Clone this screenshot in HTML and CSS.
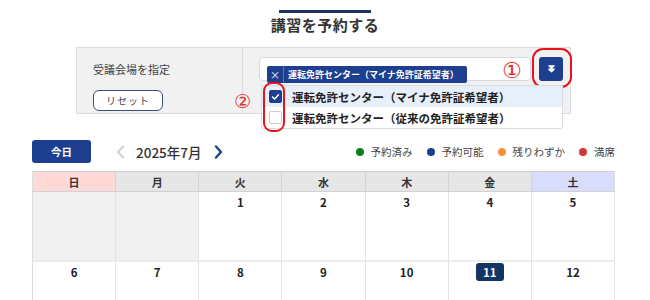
FILE: index.html
```html
<!DOCTYPE html>
<html lang="ja">
<head>
<meta charset="utf-8">
<link rel="stylesheet" href="styles.css">
</head>
<body>
<div class="page">
  <div class="title-wrap">
    <div class="title-line"></div>
    <h1 class="title">講習を予約する</h1>
  </div>

  <div class="panel">
    <div class="panel-label">
      <div class="label-text">受議会場を指定</div>
      <button class="reset">リセット</button>
    </div>
    <div class="panel-body">
      <div class="select">
        <span class="chip"><span class="chip-x">×</span><span class="chip-text">運転免許センター（マイナ免許証希望者）</span></span>
      </div>
      <button class="toggle">
        <svg width="7" height="8" viewBox="0 0 7 8"><path d="M0.8 0.8 L3.5 3.2 L6.2 0.8 Z M0.8 4.2 L3.5 6.8 L6.2 4.2 Z" fill="#fff" stroke="#fff" stroke-width="1.2" stroke-linejoin="round"/></svg>
      </button>
      <span class="mark mark1">①</span>
      <span class="hl hl1"></span>
      <div class="dropdown">
        <div class="opt opt-on"><span class="cb cb-on"><svg width="9" height="8" viewBox="0 0 9 8"><path d="M1.5 4 L3.6 6 L7.5 1.8" fill="none" stroke="#fff" stroke-width="1.5" stroke-linecap="round" stroke-linejoin="round"/></svg></span>運転免許センター（マイナ免許証希望者）</div>
        <div class="opt"><span class="cb"></span>運転免許センター（従来の免許証希望者）</div>
      </div>
      <span class="mark mark2">②</span>
      <span class="hl hl2"></span>
    </div>
  </div>

  <div class="calendar">
    <div class="toolbar">
      <button class="today">今日</button>
      <span class="nav nav-prev"><svg width="9" height="14" viewBox="0 0 9 14"><path d="M7 1.5 L2 7 L7 12.5" fill="none" stroke="#d6d6d6" stroke-width="2.4" stroke-linecap="round" stroke-linejoin="round"/></svg></span>
      <span class="month">2025年7月</span>
      <span class="nav nav-next"><svg width="9" height="14" viewBox="0 0 9 14"><path d="M2 1.5 L7 7 L2 12.5" fill="none" stroke="#1e3f8f" stroke-width="2.4" stroke-linecap="round" stroke-linejoin="round"/></svg></span>
      <div class="legend">
        <span class="lg"><i class="dot d-green"></i>予約済み</span>
        <span class="lg"><i class="dot d-navy"></i>予約可能</span>
        <span class="lg"><i class="dot d-orange"></i>残りわずか</span>
        <span class="lg"><i class="dot d-red"></i>満席</span>
      </div>
    </div>
    <div class="grid">
      <div class="hd hd-sun">日</div>
      <div class="hd">月</div>
      <div class="hd">火</div>
      <div class="hd">水</div>
      <div class="hd">木</div>
      <div class="hd">金</div>
      <div class="hd hd-sat">土</div>

      <div class="cell empty"></div>
      <div class="cell empty"></div>
      <div class="cell"><span class="num">1</span></div>
      <div class="cell"><span class="num">2</span></div>
      <div class="cell"><span class="num">3</span></div>
      <div class="cell"><span class="num">4</span></div>
      <div class="cell"><span class="num">5</span></div>

      <div class="cell"><span class="num">6</span></div>
      <div class="cell"><span class="num">7</span></div>
      <div class="cell"><span class="num">8</span></div>
      <div class="cell"><span class="num">9</span></div>
      <div class="cell"><span class="num">10</span></div>
      <div class="cell"><span class="num num-today">11</span></div>
      <div class="cell"><span class="num">12</span></div>
    </div>
  </div>
</div>
</body>
</html>
```

FILE: styles.css
```css
* { box-sizing: border-box; }
html, body { margin: 0; padding: 0; background: #fff; }
body {
  font-family: "Noto Sans CJK JP", "Noto Sans", sans-serif;
  color: #333;
  width: 650px;
  height: 300px;
  overflow: hidden;
}
.page { padding-top: 10px; }

.title-wrap { display: flex; flex-direction: column; align-items: center; }
.title-line { width: 92px; height: 3px; background: #1a3560; }
.title {
  margin: 1px 0 0;
  font-size: 15px;
  font-weight: 700;
  line-height: 22px;
  letter-spacing: 0.5px;
  color: #333;
}

.panel {
  margin: 11px 0 0 76px;
  width: 495px;
  height: 67px;
  border: 1px solid #d9dde3;
  background: #f1f1f1;
  display: flex;
}
.panel-label {
  width: 166px;
  border-right: 1px solid #d9dde3;
  padding: 13px 0 0 16px;
  display: flex;
  flex-direction: column;
  align-items: flex-start;
}
.label-text { font-size: 11px; line-height: 16px; color: #444; }
.reset {
  margin-top: 13px;
  width: 70px;
  height: 21px;
  border: 1px solid #3b4f7c;
  border-radius: 6px;
  background: #fff;
  font-family: inherit;
  font-size: 10px;
  color: #444;
  letter-spacing: 1px;
  padding: 0;
}
.panel-body { position: relative; flex: 1; }
.select {
  position: absolute;
  left: 16px;
  top: 9px;
  width: 272px;
  height: 24px;
  background: #fff;
  border: 1px solid #d6d9de;
  border-radius: 4px;
  padding: 2px 0 0 7px;
}
.chip {
  display: inline-flex;
  align-items: center;
  height: 17px;
  background: #1e3f8f;
  color: #fff;
  border-radius: 2px;
  font-size: 9px;
  font-weight: 700;
}
.chip-x {
  width: 17px;
  height: 17px;
  display: flex;
  align-items: center;
  justify-content: center;
  border-right: 1px solid #5b74b0;
  font-weight: 400;
  font-size: 10px;
}
.chip-text { padding: 0 8px 0 4px; white-space: nowrap; }
.toggle {
  position: absolute;
  left: 296px;
  top: 9px;
  width: 24px;
  height: 24px;
  background: #1e3f8f;
  border: none;
  border-radius: 3px;
  padding: 0;
  display: flex;
  align-items: center;
  justify-content: center;
}
.mark {
  position: absolute;
  color: #e8302f;
  line-height: 1;
  font-family: "DejaVu Sans", sans-serif;
}
.mark1 { left: 259px; top: 12px; font-size: 22px; }
.mark2 { left: -9px; top: 44px; font-size: 19px; }
.hl {
  position: absolute;
  border: 2.5px solid #e8141c;
  border-radius: 9px;
}
.hl1 { left: 289px; top: 0px; width: 40px; height: 40px; border-radius: 11px; }
.hl2 { left: 20px; top: 34px; width: 22px; height: 50px; }
.dropdown {
  position: absolute;
  left: 18px;
  top: 37px;
  width: 302px;
  background: #fff;
  border: 1px solid #d9dde3;
  border-radius: 0 0 3px 3px;
}
.opt {
  height: 21px;
  display: flex;
  align-items: center;
  padding-left: 7px;
  font-size: 11.5px;
  font-weight: 700;
  color: #222;
  white-space: nowrap;
}
.opt-on { background: #e7effb; }
.cb {
  width: 13px;
  height: 13px;
  border: 1px solid #c8ccd2;
  border-radius: 2px;
  background: #fff;
  margin-right: 10px;
  display: flex;
  align-items: center;
  justify-content: center;
}
.cb-on { background: #1e3f8f; border-color: #1e3f8f; }

.calendar { margin: 26px 0 0 32px; width: 583px; }
.toolbar { display: flex; align-items: center; height: 23px; }
.today {
  width: 59px;
  height: 23px;
  background: #1e3f8f;
  color: #fff;
  border: none;
  border-radius: 3px;
  font-family: inherit;
  font-size: 10.5px;
  font-weight: 700;
  padding: 0;
}
.nav { display: flex; align-items: center; }
.nav-prev { margin-left: 25px; }
.month { margin-left: 11px; font-size: 13.5px; color: #333; font-weight: 500; }
.nav-next { margin-left: 13px; }
.legend { margin-left: auto; display: flex; gap: 14px; font-size: 10.5px; color: #444; }
.lg { display: flex; align-items: center; }
.dot { width: 8px; height: 8px; border-radius: 50%; margin-right: 7px; display: inline-block; }
.d-green { background: #0f7d1c; }
.d-navy { background: #1e3f8f; }
.d-orange { background: #f7923a; }
.d-red { background: #d13a3a; }

.grid {
  margin-top: 8px;
  display: grid;
  grid-template-columns: repeat(7, 1fr);
  border-left: 1px solid #dddddd;
}
.hd {
  height: 21px;
  background: #e6e6e6;
  border-right: 1px solid #d2d2d2;
  border-top: 1px solid #d2d2d2;
  border-bottom: 1px solid #d2d2d2;
  display: flex;
  align-items: center;
  justify-content: center;
  font-size: 11px;
  font-weight: 700;
  color: #333;
}
.hd-sun { background: #ffd8d8; }
.hd-sat { background: #d8dcfd; border-right-color: #dddddd; }
.cell {
  height: 70px;
  border-right: 1px solid #e3e3e3;
  border-bottom: 2px solid #ececec;
  display: flex;
  justify-content: center;
  padding-top: 1px;
}
.cell.empty { background: #f1f1f1; }
.num {
  font-size: 11.5px;
  font-weight: 700;
  color: #222;
  height: 18px;
  line-height: 18px;
}
.num-today {
  background: #143564;
  color: #fff;
  padding: 0 7px;
  border-radius: 3px;
}
```
